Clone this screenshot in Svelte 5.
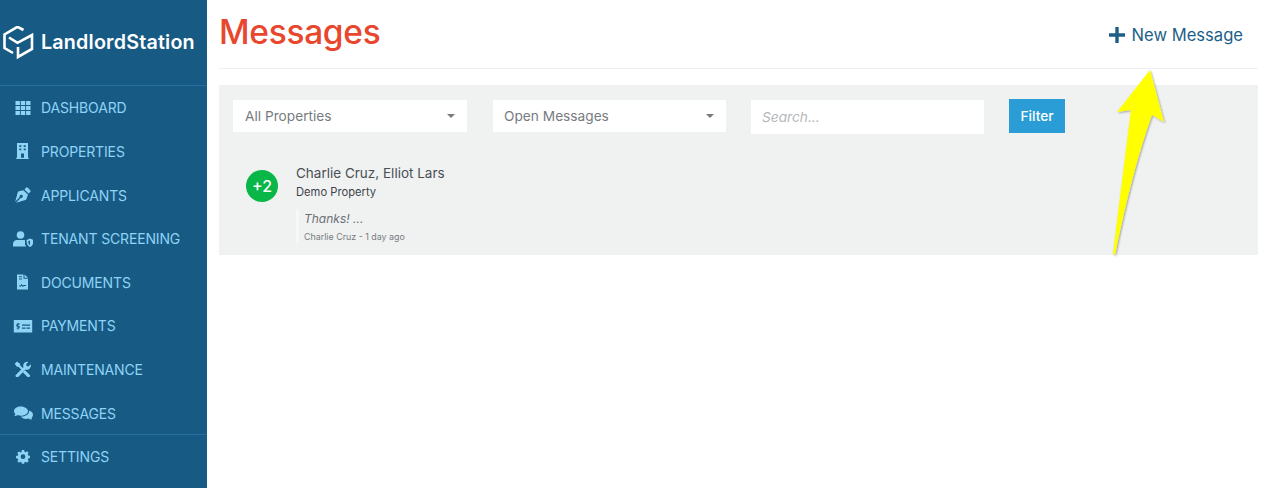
<script>
  const menu = [
    { label: 'DASHBOARD', icon: 'th' },
    { label: 'PROPERTIES', icon: 'building' },
    { label: 'APPLICANTS', icon: 'pen' },
    { label: 'TENANT SCREENING', icon: 'shield' },
    { label: 'DOCUMENTS', icon: 'file' },
    { label: 'PAYMENTS', icon: 'check' },
    { label: 'MAINTENANCE', icon: 'tools' },
    { label: 'MESSAGES', icon: 'comments' }
  ];
</script>

{#snippet icon(name)}
  <svg class="icon" width="20" height="16" viewBox="0 0 20 16" fill="currentColor">
    {#if name === 'th'}
      <path d="M2.500 1h4.400v4H2.500zM7.800 1h4.400v4H7.800zM13.100 1h4.400v4h-4.400zM2.500 6h4.400v4H2.500zM7.800 6h4.400v4H7.800zM13.100 6h4.400v4h-4.400zM2.500 11h4.400v4H2.500zM7.800 11h4.400v4H7.800zM13.100 11h4.400v4h-4.400z" />
    {:else if name === 'building'}
      <path fill-rule="evenodd" d="M4 0h11v14.700h.8V16H3.200v-1.300H4zM6.300 2.300v1.800h2V2.300zM10.700 2.300v1.800h2V2.300zM6.300 5.500v1.800h2V5.500zM10.700 5.500v1.800h2V5.500zM8 10.500v4.200h3v-4.200z" />
    {:else if name === 'pen'}
      <path fill-rule="evenodd" d="M13 .8a1.300 1.300 0 0 1 1.800 0l2.400 2.400a1.300 1.300 0 0 1 0 1.800l-1.700 1.500-4-4zM10.200 3.200l4.700 4.300-1.300 4.300c-.2.600-.6 1-1.200 1.200L3 15.700l4.700-4.800a1.600 1.600 0 1 0-1-1L2.200 14.700l2.500-9.300c.2-.6.600-1 1.200-1.200z" />
    {:else if name === 'shield'}
      <circle cx="7.500" cy="4" r="3.800" />
      <path d="M0 15.500v-2.500c0-2.500 2-4 4-4h6.500c.5 0 1 .1 1.500.3V12c0 1.500.5 2.600 1.300 3.500z" />
      <path fill-rule="evenodd" d="M17 7.500l3.500 1.500c0 3.500-1 6-3.500 7-2.500-1-3.500-3.500-3.500-7zM17 9.500l-1.800.8c.1 1.900.6 3.200 1.800 3.900z" />
    {:else if name === 'file'}
      <path fill-rule="evenodd" d="M4 .5h6.500v4.300H15V15.500H4zM11.500.5l3.500 3.300h-3.500zM6 2.200v1.100h3V2.200zM6 4.500v1.100h3V4.500zM6 11.500l1.500-.1 1-1.600 1 1.800 1-.7h2.500v1h-2l-1.700 1.200-.8-1.500-.5.8L6 12.500z" />
    {:else if name === 'check'}
      <path fill-rule="evenodd" d="M.8 2h18.400v12.500H.8zM4.500 5v.8a1.500 1.500 0 0 0-.3 2.900l1 .4c.3.200.1.500-.1.500H3.600v1h.9v.8h1v-.8a1.500 1.500 0 0 0 .3-2.900l-1-.4c-.3-.2-.1-.5.1-.5h1.500V5.300h-.9V5zM9 6.500v1.300h8V6.500zM9 9.500v1.200h3.500V9.500zM13.500 9.500v1.200H17V9.500z" />
    {:else if name === 'tools'}
      <path d="M4 .5 7 2.700v1.500l3.300 3.300-1.600 1.600L5.400 5.800H3.900L1.700 2.800zM12 9.300l4.600 4.500a1.500 1.500 0 0 1-2.300 2L9.800 11.200z" />
      <path d="M17.600 3.200 15.500 5.400l-1.900-.4-.4-1.900L15.400 1a4 4 0 0 0-4.900 5.300L3 13.800a1.500 1.500 0 0 0 2.200 2.100l7.400-7.400a4 4 0 0 0 5-5.300z" />
    {:else if name === 'comments'}
      <path d="M8 1.500c-4 0-7 2.100-7 4.700 0 1.100.5 2.100 1.400 3-.4 1-1.300 1.900-1.400 2 1.500 0 2.800-.6 3.500-1.100 1.100.4 2.300.6 3.500.6 3.900 0 7-2.200 7-4.500S11.900 1.500 8 1.500z" />
      <path d="M18.900 12.500c.7-.8 1.100-1.700 1.100-2.800 0-2-1.800-3.600-3.900-4.200.4 3.600-3.500 6.300-8.300 6 1 1.500 3 2.500 5.200 2.500 1 0 1.900-.2 2.700-.5.700.5 1.800 1.100 3.300 1.100-.1-.1-.7-.9-.1-2.100z" />
    {:else if name === 'cog'}
      <path transform="translate(2.200 1) scale(.78)" fill-rule="evenodd" d="M8.500 0h3l.4 2.200 1.300.6L15.100 1.500l2.200 2.200-1.300 1.900.6 1.300 2.300.5v3l-2.300.5-.6 1.300 1.300 1.900-2.200 2.200-1.900-1.300-1.300.6-.4 1.900h-3l-.4-1.900-1.300-.6-1.900 1.300-2.200-2.200L4 12.500l-.6-1.300-2.300-.5v-3l2.300-.5.600-1.300-1.300-1.900 2.200-2.200 1.900 1.300 1.300-.6zM10 5.500a3 3 0 1 0 0 6 3 3 0 0 0 0-6z" />
    {/if}
  </svg>
{/snippet}

<div class="page">
  <aside class="sidebar">
    <div class="brand">
      <svg class="logo" width="32" height="34" viewBox="3 25 32 34" fill="none" stroke="#fff" stroke-width="2.600">
        <path d="M23.500 29 17.500 25.800 4.500 33.500V47L13 52" />
        <path d="M9 36.500 17.500 41.800 32 34V48L18 56V46" />
      </svg>
      <span>LandlordStation</span>
    </div>
    <nav class="menu">
      {#each menu as item}
        <div class="item">
          {@render icon(item.icon)}
          <span>{item.label}</span>
        </div>
      {/each}
    </nav>
    <div class="item settings">
      {@render icon('cog')}
      <span>SETTINGS</span>
    </div>
  </aside>

  <main class="content">
    <header class="top">
      <h1>Messages</h1>
      <div class="new">
        <svg width="16" height="16" viewBox="0 0 16 16" fill="currentColor"><path d="M6.300 0h3.400v6.300H16v3.400H9.700V16H6.300V9.700H0V6.300h6.300z" /></svg>
        <span>New Message</span>
      </div>
    </header>

    <section class="panel">
      <div class="filters">
        <div class="select"><span>All Properties</span><i class="caret"></i></div>
        <div class="select"><span>Open Messages</span><i class="caret"></i></div>
        <div class="search">Search...</div>
        <div class="filter">Filter</div>
      </div>

      <div class="thread">
        <div class="badge">+2</div>
        <div class="body">
          <div class="names">Charlie Cruz, Elliot Lars</div>
          <div class="property">Demo Property</div>
          <div class="quote">
            <div class="text">Thanks! ...</div>
            <div class="meta">Charlie Cruz - 1 day ago</div>
          </div>
        </div>
      </div>
    </section>
  </main>

  <svg class="arrow" width="70" height="200" viewBox="1105 65 70 200">
    <defs>
      <filter id="shade" x="-20%" y="-10%" width="140%" height="120%">
        <feDropShadow dx="1" dy="1" stdDeviation="1" flood-color="#000" flood-opacity="0.35" />
      </filter>
    </defs>
    <path d="M1150 70 1164 122 1152 115Q1132 170 1115 255L1113 254Q1122 180 1131 110L1117 112z" fill="#ffff00" filter="url(#shade)" />
  </svg>
</div>

<style>
  :global(body) {
    margin: 0;
    background: #fff;
    font-family: Inter, "Liberation Sans", sans-serif;
  }

  .page {
    position: relative;
    display: flex;
    width: 1270px;
    height: 488px;
    overflow: hidden;
  }

  .sidebar {
    width: 207px;
    flex: none;
    background: #175b85;
    color: #8fd3f5;
  }

  .brand {
    display: flex;
    align-items: center;
    gap: 6px;
    height: 86px;
    padding-left: 3px;
    box-sizing: border-box;
    border-bottom: 1px solid #2470a0;
    color: #fff;
    font-size: 19.700px;
    font-weight: 600;
    letter-spacing: 0.2px;
  }

  .brand span {
    margin-bottom: 2px;
  }

  .menu {
    padding-top: 0.100px;
    border-bottom: 1px solid #2470a0;
    height: 349px;
    box-sizing: border-box;
  }

  .item {
    display: flex;
    align-items: center;
    gap: 8px;
    height: 43.600px;
    padding-left: 13px;
    font-size: 14px;
    letter-spacing: -0.15px;
  }

  .settings {
    height: 43px;
  }

  .icon {
    flex: none;
  }

  .content {
    flex: 1;
    padding: 0 12px;
  }

  .top {
    display: flex;
    align-items: center;
    justify-content: space-between;
    height: 69px;
    box-sizing: border-box;
    border-bottom: 1px solid #eef0f0;
  }

  h1 {
    margin: 0 0 4px;
    color: #e8472e;
    font-size: 33.500px;
    font-weight: 500;
    letter-spacing: -0.3px;
  }

  .new {
    display: flex;
    align-items: center;
    gap: 7px;
    margin-top: 2px;
    padding-right: 15px;
    color: #1d5f88;
    font-size: 16.600px;
  }

  .panel {
    margin-top: 16px;
    height: 170px;
    box-sizing: border-box;
    padding: 14px 14px 0;
    background: #f0f2f2;
  }

  .filters {
    display: flex;
    align-items: flex-start;
    font-size: 13.700px;
    color: #777b80;
  }

  .select {
    display: flex;
    align-items: center;
    justify-content: space-between;
    width: 234px;
    height: 32px;
    margin: 1px 26px 0 0;
    padding: 0 12px;
    box-sizing: border-box;
    background: #fff;
  }

  .select:nth-child(2) {
    width: 233px;
    margin-right: 25px;
    padding-left: 11px;
  }

  .caret {
    width: 0;
    height: 0;
    border: 4px solid transparent;
    border-top-color: #777b80;
    border-bottom: 0;
  }

  .search {
    width: 233px;
    height: 34px;
    margin: 1px 25px 0 0;
    padding-left: 11px;
    box-sizing: border-box;
    background: #fff;
    color: #b5b7ba;
    font-style: italic;
    line-height: 34px;
  }

  .filter {
    width: 56px;
    height: 34px;
    background: #2a9dd6;
    color: #fff;
    font-weight: 500;
    text-align: center;
    line-height: 34px;
  }

  .thread {
    display: flex;
    align-items: flex-start;
    margin-top: 31px;
    padding-left: 13px;
    color: #4a4f55;
  }

  .badge {
    width: 32px;
    height: 32px;
    margin: 5px 18px 0 0;
    border-radius: 50%;
    background: #08b748;
    color: #fff;
    font-size: 16px;
    font-weight: 500;
    text-align: center;
    line-height: 32px;
  }

  .names {
    font-size: 13.500px;
    line-height: 17px;
  }

  .property {
    margin-top: 3px;
    font-size: 11.200px;
    line-height: 14px;
    color: #3e434a;
  }

  .quote {
    margin-top: 10px;
    padding: 1px 0 0 5px;
    border-left: 3px solid #f6f7f7;
  }

  .text {
    font-size: 12px;
    font-style: italic;
    line-height: 17px;
    color: #6b6f75;
  }

  .meta {
    margin-top: 3px;
    font-size: 8.900px;
    line-height: 13px;
    color: #777b80;
  }

  .arrow {
    position: absolute;
    left: 1105px;
    top: 65px;
  }
</style>
